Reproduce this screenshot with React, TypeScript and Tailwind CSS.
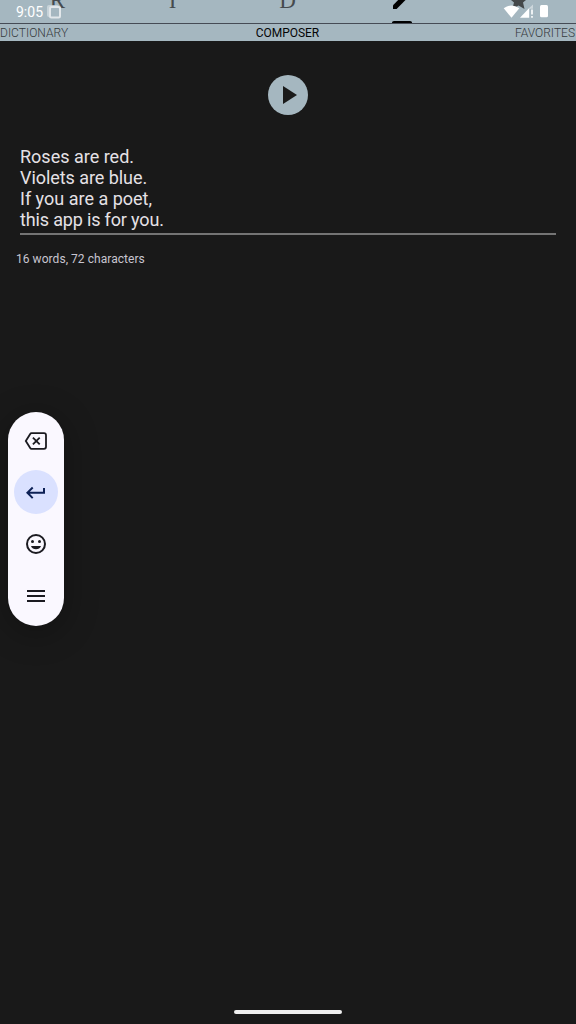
import React from "react";

function StatusIcons() {
  return (
    <svg className="absolute left-[503px] top-1 h-4 w-[50px]" viewBox="503 4 50 16" fill="#fff">
      <path d="M503.700 8.300Q511.500 2.700 519.300 8.300L511.500 17.800Z" />
      <path d="M520 17.800L529.200 8V17.800Z" />
      <path d="M529.200 8L533 4.500V8.800H529.200Z" fillOpacity=".45" />
      <path d="M531 9.500h2v5h-2zM531 16h2v1.800h-2z" fillOpacity=".8" />
      <rect x="540" y="5" width="8" height="12.300" rx="1.500" />
    </svg>
  );
}

function LetterTab({ letter }: { letter: string }) {
  return (
    <div className="flex h-[23px] w-[115px] items-start justify-center overflow-hidden">
      <span className="-mt-[10px] font-['Liberation_Serif',serif] text-[23px] leading-[22px] text-[#464b4e]">
        {letter}
      </span>
    </div>
  );
}

function Tabs() {
  return (
    <div className="flex h-[23px] w-full">
      <LetterTab letter="R" />
      <LetterTab letter="I" />
      <LetterTab letter="D" />
      <div className="flex w-[115px] justify-center">
        <svg className="h-[23px] w-6" viewBox="391 0 24 23">
          <path d="M393 9V5.200L398.200 0H405.500L396.600 9Z" />
          <path d="M392 24V22.500Q392 21 394 21H410Q412 21 412 22.500V24Z" />
        </svg>
      </div>
      <div className="flex grow justify-center">
        <svg className="h-[23px] w-6" viewBox="506 0 24 23" fill="#44484a">
          <path d="M511 0H526L523 2.500L524.500 9L518.500 5.600L512.300 9L514 2.500Z" />
        </svg>
      </div>
    </div>
  );
}

function KeyIcon({ d, fill = "#1b1b21" }: { d: string; fill?: string }) {
  return (
    <svg className="size-6" viewBox="0 0 24 24" fill={fill}>
      <path d={d} />
    </svg>
  );
}

function KeyboardPill() {
  return (
    <div className="absolute left-2 top-[412px] flex h-[214px] w-14 flex-col items-center gap-2 rounded-full bg-[#faf8ff] pt-[6px] shadow-[0_6px_32px_4px_rgba(0,0,0,0.24)]">
      <div className="flex size-11 items-center justify-center pt-0.5">
        <svg className="size-6" viewBox="0 0 24 24" fill="none" stroke="#1b1b21" strokeWidth="1.800">
          <path d="M7.500 4.200H20Q22 4.200 22 6.200V17.800Q22 19.800 20 19.800H7.500Q6.700 19.800 6.200 19L1.800 12L6.200 5Q6.700 4.200 7.500 4.200Z" />
          <path d="M8.900 8.600L15.700 15.400M15.700 8.600L8.900 15.400" />
        </svg>
      </div>
      <div className="flex size-11 items-center justify-center rounded-full bg-[#dae1ff]">
        <KeyIcon fill="#0d2155" d="M19 8v3.800H5.830l3.580-3.590L8 6.800l-6 6 6 6 1.410-1.410L5.830 13.800H21V8z" />
      </div>
      <div className="flex size-11 items-center justify-center">
        <svg className="size-6" viewBox="0 0 24 24" fill="#1b1b21">
          <circle cx="12" cy="12" r="9" fill="none" stroke="#1b1b21" strokeWidth="2" />
          <circle cx="8.500" cy="9.500" r="1.500" />
          <circle cx="15.500" cy="9.500" r="1.500" />
          <path d="M7 14H17C16.200 16.100 14.300 17.300 12 17.300S7.800 16.100 7 14Z" />
        </svg>
      </div>
      <div className="flex size-11 items-center justify-center">
        <KeyIcon d="M3 6h18v2H3zM3 11h18v2H3zM3 16h18v2H3z" />
      </div>
    </div>
  );
}

export default function App() {
  return (
    <div className="relative h-[1024px] w-[576px] overflow-hidden bg-[#191919] font-[Roboto,sans-serif]">
      <header className="flex h-[41px] flex-col bg-[#a5b7c0]">
        <Tabs />
        <div className="h-px bg-[#454b55]" />
        <nav className="grid h-[17px] grid-cols-3 text-[12px] font-light leading-[18px] text-[#353a3d]">
          <span className="tracking-[0.03px]">DICTIONARY</span>
          <span className="pr-px text-center font-normal tracking-[-0.05px] text-[#050607]">COMPOSER</span>
          <span className="pr-px text-right">FAVORITES</span>
        </nav>
      </header>
      <span className="absolute left-4 top-1 text-[14px] leading-4 text-white">9:05</span>
      <svg className="absolute left-[46px] top-1 size-4" viewBox="46 4 16 16" fill="none">
        <rect x="47" y="5" width="12" height="12" rx="2" fill="#d0d9de" fillOpacity=".8" />
        <rect x="50" y="7" width="10" height="10.500" rx="1.500" fill="#a5b7c0" stroke="#e2e7ea" strokeWidth="2" />
      </svg>
      <StatusIcons />
      <main className="flex flex-col">
        <button className="mt-[34px] flex size-10 items-center justify-center self-center rounded-full bg-[#a5b7c0]">
          <svg className="size-10" viewBox="0 0 40 40" fill="#1a1a1a">
            <path d="M15 11V29L29 20Z" />
          </svg>
        </button>
        <div className="mx-5 mt-[31px] flex h-[89px] flex-col border-b-2 border-[#747474] text-[18px] leading-[21px] text-[#e5e1e6]">
          <span>Roses are red.</span>
          <span className="tracking-[-0.06px]">Violets are blue.</span>
          <span>If you are a poet,</span>
          <span className="tracking-[-0.16px]">this app is for you.</span>
        </div>
        <p className="ml-4 mt-4 text-[12px] leading-4 tracking-[0.05px] text-[#c8c5d0]">16 words, 72 characters</p>
      </main>
      <KeyboardPill />
      <div className="absolute left-[234px] top-[1010px] h-1 w-[108px] rounded-full bg-[#efefef]" />
    </div>
  );
}
